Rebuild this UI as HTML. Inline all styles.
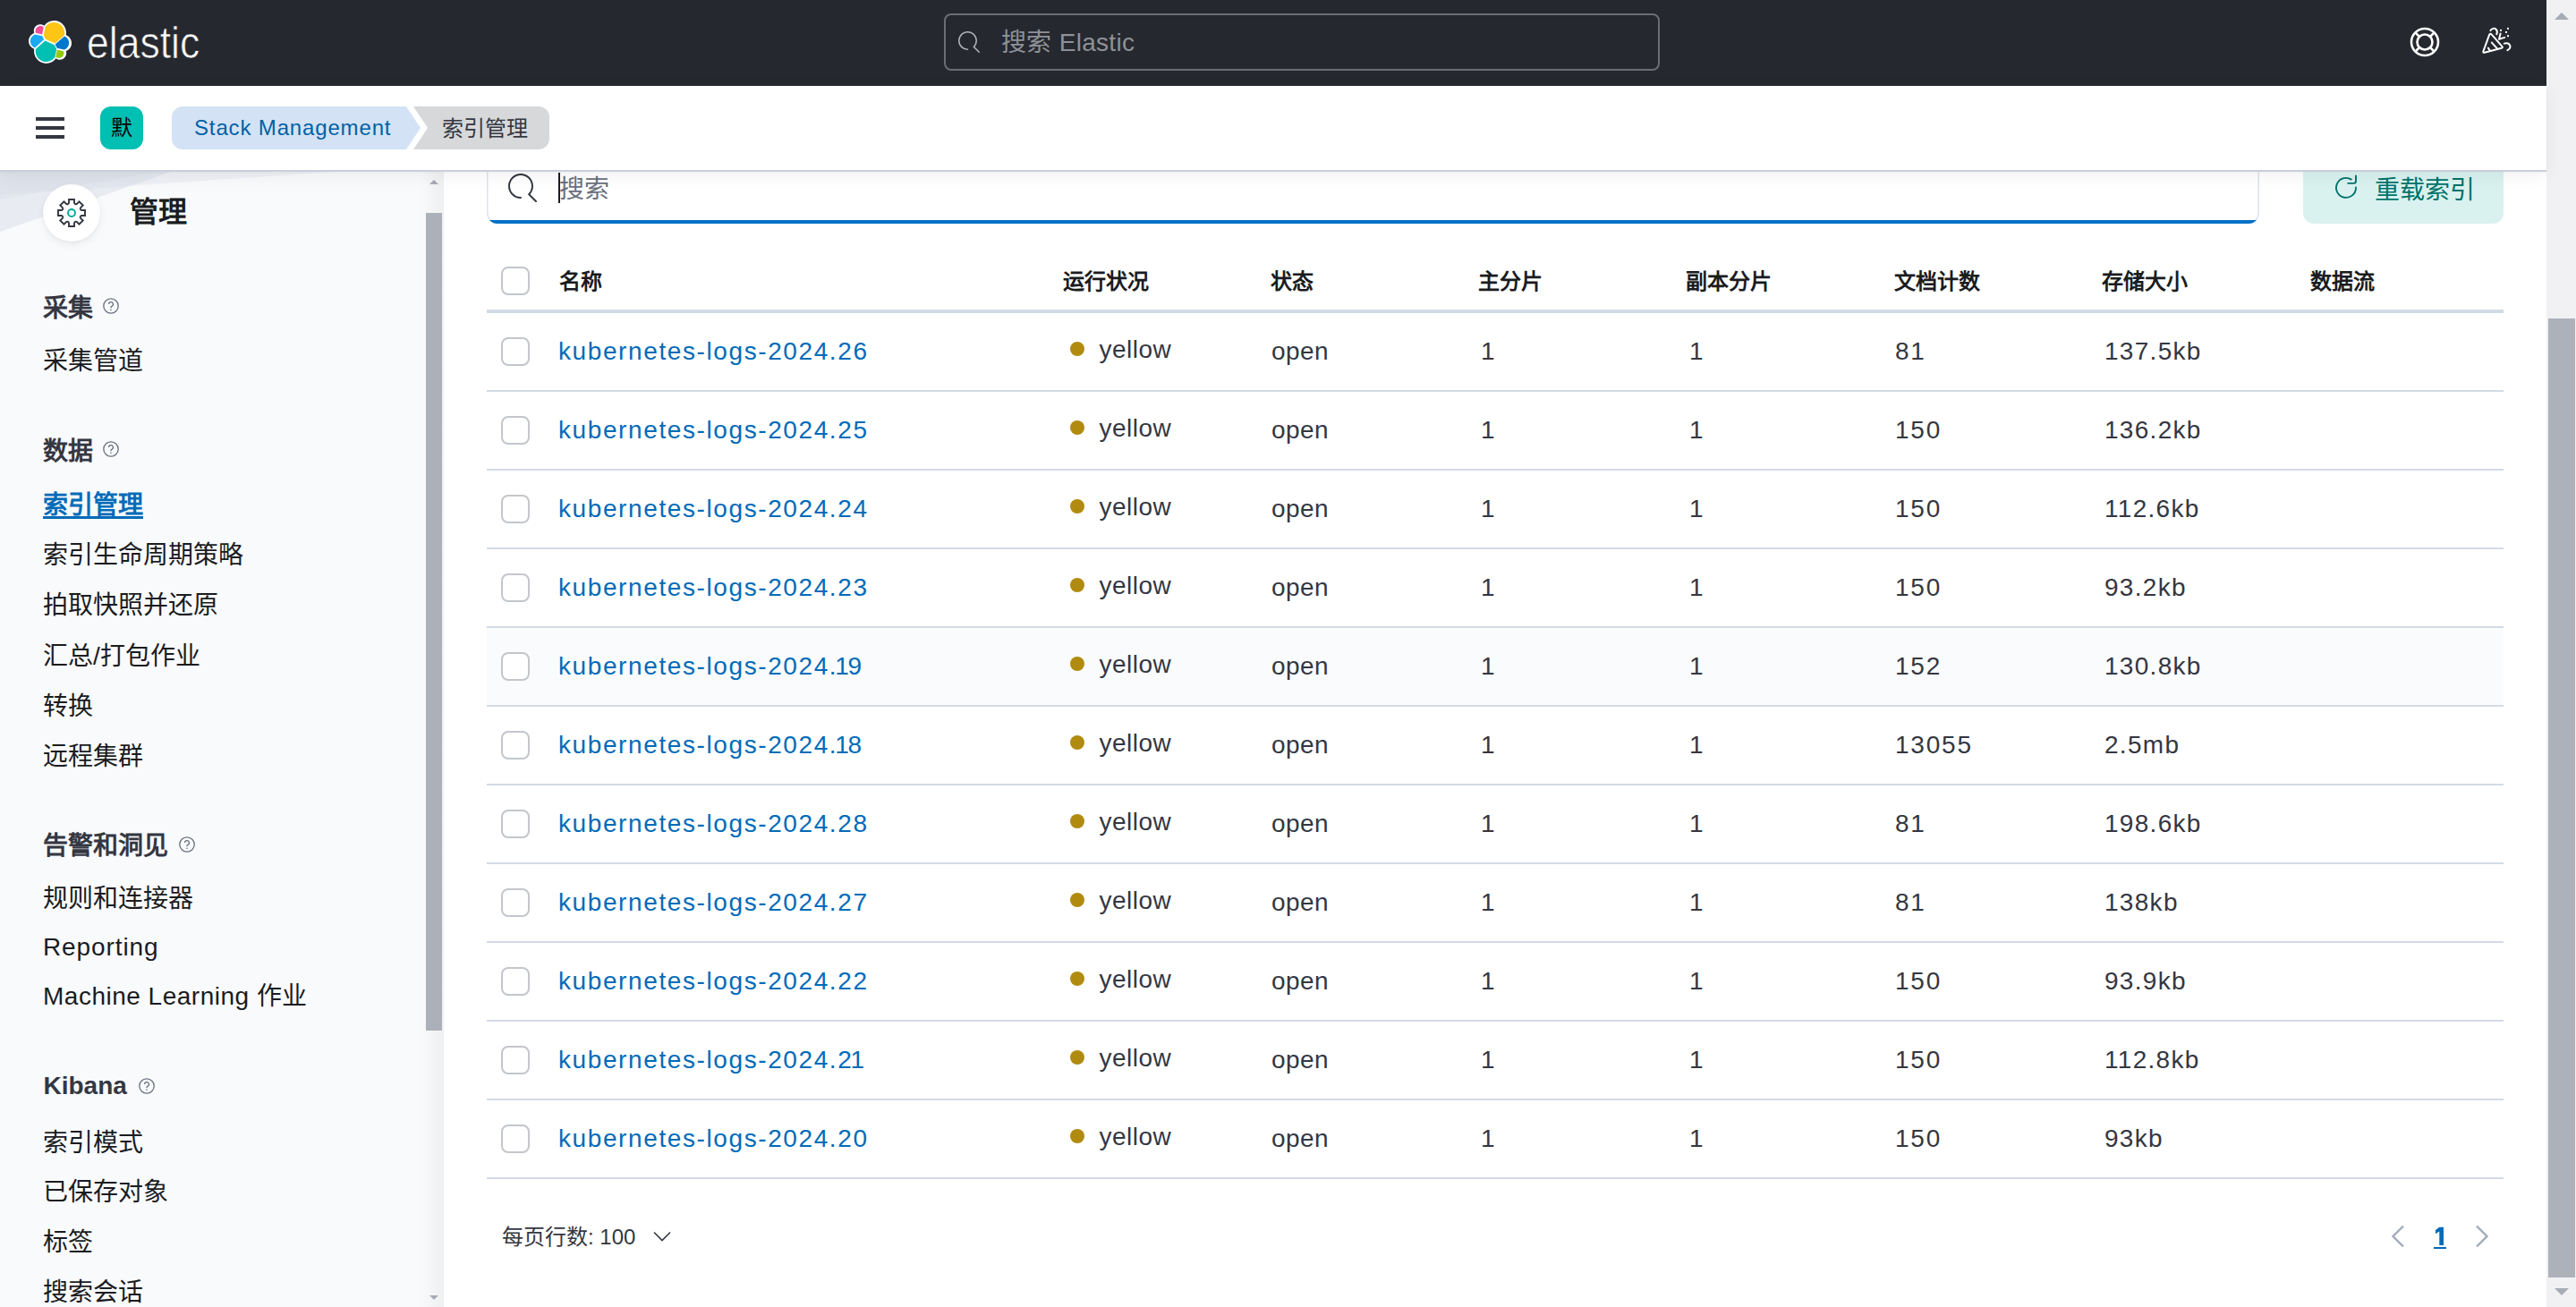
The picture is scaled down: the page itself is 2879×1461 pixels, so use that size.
<!DOCTYPE html>
<html lang="zh-CN"><head><meta charset="utf-8"><title>Index Management</title>
<style>
html,body{margin:0;padding:0;}
body{width:2879px;height:1461px;overflow:hidden;position:relative;background:#fff;font-family:'Liberation Sans', sans-serif;}
.t{position:absolute;white-space:nowrap;}
</style></head><body>
<div style="position:absolute;left:0;top:0;width:2846px;height:96px;background:#25282f"></div>
<svg style="position:absolute;left:32px;top:23px" width="48" height="48" viewBox="0 0 32 32"><g fill="none" fill-rule="evenodd">
<path fill="#FFF" d="M32 16.77c0-2.68-1.665-5.035-4.17-5.945.11-.565.165-1.14.165-1.730C27.995 4.110 23.945.060 18.965.060c-2.920 0-5.635 1.400-7.340 3.755-.840-.650-1.870-1.005-2.950-1.005-2.645 0-4.800 2.150-4.800 4.800 0 .585.105 1.145.295 1.665C1.685 10.175 0 12.545 0 15.225c0 2.695 1.675 5.045 4.185 5.955-.110.565-.165 1.140-.165 1.735 0 4.975 4.045 9.020 9.020 9.020 2.920 0 5.635-1.405 7.330-3.770.840.655 1.875 1.015 2.955 1.015 2.645 0 4.800-2.150 4.800-4.800 0-.585-.105-1.145-.295-1.665 2.485-.895 4.170-3.270 4.170-5.940"/>
<path fill="#FEC514" d="M12.58 13.78l7.005 3.195 7.070-6.195c.100-.510.150-1.020.150-1.555 0-4.365-3.550-7.915-7.915-7.915-2.610 0-5.045 1.285-6.525 3.445l-1.175 6.090 1.390 2.930z"/>
<path fill="#00BFB3" d="M5.33 21.2c-.1.51-.155 1.04-.155 1.575 0 4.375 3.56 7.935 7.94 7.935 2.63 0 5.075-1.3 6.55-3.475l1.165-6.075-1.555-2.975-7.03-3.205-6.915 6.22z"/>
<path fill="#F04E98" d="M5.29 9.17l4.8 1.135 1.05-5.46c-.65-.5-1.455-.77-2.29-.77-2.08 0-3.775 1.695-3.775 3.775 0 .46.075.9.215 1.32"/>
<path fill="#1BA9F5" d="M4.875 10.31c-2.145.71-3.64 2.77-3.64 5.03 0 2.2 1.36 4.165 3.405 4.945l6.74-6.09-1.235-2.64-5.27-1.245z"/>
<path fill="#93C90E" d="M20.2 27.13c.66.505 1.46.785 2.28.785 2.08 0 3.775-1.695 3.775-3.775 0-.46-.075-.9-.215-1.32l-4.795-1.12-1.045 5.43z"/>
<path fill="#0077CC" d="M21.175 20.43l5.28 1.235c2.145-.71 3.64-2.77 3.64-5.035 0-2.195-1.36-4.16-3.41-4.94l-6.905 6.05 1.395 2.69z"/>
</g></svg>
<div class="t" style="left:97px;top:23.2px;font-size:50px;line-height:50px;color:#fff;font-weight:400;letter-spacing:0px;transform:scaleX(0.89);transform-origin:0 0;-webkit-text-stroke:0.7px #25282f;">elastic</div>
<div style="position:absolute;left:1055px;top:15px;width:796px;height:60px;border:2px solid #6a6d74;border-radius:8px;box-sizing:content-box"></div>
<svg style="position:absolute;left:1071px;top:35px" width="24" height="24" viewBox="0 0 16 16"><path fill="#b0b2b6" d="M11.271 11.978l3.872 3.873a.502.502 0 0 0 .708 0 .502.502 0 0 0 0-.708l-3.565-3.564c2.38-2.747 2.267-6.923-.342-9.532-2.73-2.73-7.17-2.73-9.898 0-2.728 2.729-2.728 7.17 0 9.9a6.955 6.955 0 0 0 4.949 2.05.5.5 0 0 0 0-1 5.96 5.96 0 0 1-4.242-1.757 6.01 6.01 0 0 1 0-8.486c2.337-2.34 6.143-2.34 8.484 0a6.01 6.01 0 0 1 0 8.486.5.5 0 0 0 .034.738z"/></svg>
<div class="t" style="left:1119px;top:33.6px;font-size:28px;line-height:28px;color:#8e9196;font-weight:400;letter-spacing:0.3px;">搜索 Elastic</div>
<svg style="position:absolute;left:2693px;top:30px" width="34" height="34" viewBox="0 0 34 34" fill="none" stroke="#fff" stroke-width="2.6"><circle cx="17" cy="17" r="15"/><circle cx="17" cy="17" r="8.5"/><path d="M6.4 6.4l4.6 4.6M27.6 6.4l-4.6 4.6M6.4 27.6l4.6-4.6M27.6 27.6l-4.6-4.6"/></svg>
<svg style="position:absolute;left:2765px;top:24px" width="50" height="44" viewBox="0 0 50 44" fill="none" stroke="#fff" stroke-width="2" stroke-linecap="round" stroke-linejoin="round"><path d="M17.2 14.6L10.4 33.3Q9.9 35.2 11.8 34.8L30.8 29.8Q32.6 29.2 31.4 27.9L19.6 14.4Q18 12.9 17.2 14.6Z"/><path d="M19.9 23.6L26.4 30.8M15.9 29.6L18 33"/><path d="M18.4 10.2C19.6 7.6 23 7.1 24.8 9C26.1 10.5 26.1 12.6 25.3 14.3"/><path d="M29.6 13.6L28 19.8L34.2 17.9"/><path d="M33.8 24.6C36.6 23.6 39.6 24.6 40.3 27.1C40.8 29.1 39.6 31.1 37.4 32.2"/><rect x="29" y="8.9" width="2" height="2" fill="#fff" stroke="none"/><rect x="37" y="6.9" width="2" height="2" fill="#fff" stroke="none"/><rect x="35" y="11" width="2" height="2" fill="#fff" stroke="none"/><rect x="37" y="15.2" width="2" height="2" fill="#fff" stroke="none"/></svg>
<div style="position:absolute;left:0;top:96px;width:2846px;height:94px;background:#fff;box-shadow:0 2px 0 #c9cfdc, 0 2px 2px rgba(0,0,0,.07), 0 6px 20px rgba(0,0,0,.06);z-index:5"></div>
<div style="position:absolute;z-index:6;left:40px;top:131px;width:32px;height:4px;background:#343741"></div>
<div style="position:absolute;z-index:6;left:40px;top:141px;width:32px;height:4px;background:#343741"></div>
<div style="position:absolute;z-index:6;left:40px;top:151px;width:32px;height:4px;background:#343741"></div>
<div style="position:absolute;z-index:6;left:112px;top:119px;width:48px;height:48px;background:#00bfb3;border-radius:12px"></div>
<div class="t" style="z-index:7;left:112px;width:48px;text-align:center;top:129px;font-size:24px;line-height:28px;color:#000">默</div>
<svg style="position:absolute;z-index:6;left:192px;top:119px" width="424" height="48" viewBox="0 0 424 48">
<path d="M12 0H262L278 24L262 48H12A12 12 0 0 1 0 36V12A12 12 0 0 1 12 0Z" fill="#d3e2f4"/>
<path d="M270 0H410A12 12 0 0 1 422 12V36A12 12 0 0 1 410 48H270L286 24Z" fill="#d7d8da"/></svg>
<div class="t" style="left:217px;top:130.5px;font-size:24px;line-height:24px;color:#0061a6;font-weight:400;letter-spacing:0.85px;z-index:7;">Stack Management</div>
<div class="t" style="left:494px;top:131.7px;font-size:24px;line-height:24px;color:#343741;font-weight:400;letter-spacing:0px;z-index:7;">索引管理</div>
<div style="position:absolute;left:0;top:190px;width:496px;height:1271px;background:#f9fafc;overflow:hidden">
<svg style="position:absolute;left:0;top:0" width="496" height="200"><polygon points="0,0 197,0 0,69" fill="rgba(211,218,230,.45)"/><polygon points="0,0 186,0 0,33" fill="rgba(211,218,230,.3)"/><polygon points="0,0 400,0 0,28" fill="rgba(211,218,230,.3)"/></svg>
</div>
<div style="position:absolute;left:470px;top:190px;width:26px;height:1271px;background:linear-gradient(to right, rgba(0,0,0,0), rgba(0,0,0,.045))"></div>
<div style="position:absolute;left:476px;top:238px;width:18px;height:914px;background:#acb0b8"></div>
<div style="position:absolute;left:480px;top:201px;width:0;height:0;border-left:5px solid transparent;border-right:5px solid transparent;border-bottom:5px solid #a7abb3"></div>
<div style="position:absolute;left:480px;top:1448px;width:0;height:0;border-left:5px solid transparent;border-right:5px solid transparent;border-top:5px solid #a7abb3"></div>
<div style="position:absolute;left:48px;top:206px;width:64px;height:64px;border-radius:50%;background:#fff;box-shadow:0 4px 10px rgba(0,0,0,.06),0 1px 3px rgba(0,0,0,.05)"></div>
<svg style="position:absolute;left:62px;top:220px" width="36" height="36" viewBox="0 0 36 36" fill="none"><path d="M15.00 6.70L15.00 3.00L21.00 3.00L21.00 6.70Q21.67 9.13 23.87 7.89L26.49 5.27L30.73 9.51L28.11 12.13Q26.87 14.33 29.30 15.00L33.00 15.00L33.00 21.00L29.30 21.00Q26.87 21.67 28.11 23.87L30.73 26.49L26.49 30.73L23.87 28.11Q21.67 26.87 21.00 29.30L21.00 33.00L15.00 33.00L15.00 29.30Q14.33 26.87 12.13 28.11L9.51 30.73L5.27 26.49L7.89 23.87Q9.13 21.67 6.70 21.00L3.00 21.00L3.00 15.00L6.70 15.00Q9.13 14.33 7.89 12.13L5.27 9.51L9.51 5.27L12.13 7.89Q14.33 9.13 15.00 6.70Z" stroke="#343741" stroke-width="1.9" stroke-linejoin="miter"/><circle cx="18" cy="18" r="4" stroke="#00a69b" stroke-width="1.8"/></svg>
<div class="t" style="left:145px;top:220.9px;font-size:32px;line-height:32px;color:#1a1c21;font-weight:700;letter-spacing:0px;">管理</div>
<div class="t" style="left:48px;top:331.2px;font-size:28px;line-height:28px;color:#343741;font-weight:700;letter-spacing:0px;">采集</div>
<svg style="position:absolute;left:115px;top:333.4px" width="18" height="18" viewBox="0 0 18 18" fill="none"><circle cx="9" cy="9" r="8.2" stroke="#69707d" stroke-width="1.3"/><path d="M6.6 7.1a2.4 2.4 0 1 1 3.3 2.2c-.6.3-.9.7-.9 1.3v.6" stroke="#69707d" stroke-width="1.3"/><circle cx="9" cy="13.3" r=".8" fill="#69707d"/></svg>
<div class="t" style="left:48px;top:390.4px;font-size:28px;line-height:28px;color:#1a1c21;font-weight:400;letter-spacing:0px;">采集管道</div>
<div class="t" style="left:48px;top:491.1px;font-size:28px;line-height:28px;color:#343741;font-weight:700;letter-spacing:0px;">数据</div>
<svg style="position:absolute;left:115px;top:493.3px" width="18" height="18" viewBox="0 0 18 18" fill="none"><circle cx="9" cy="9" r="8.2" stroke="#69707d" stroke-width="1.3"/><path d="M6.6 7.1a2.4 2.4 0 1 1 3.3 2.2c-.6.3-.9.7-.9 1.3v.6" stroke="#69707d" stroke-width="1.3"/><circle cx="9" cy="13.3" r=".8" fill="#69707d"/></svg>
<div class="t" style="left:48px;top:550.8px;font-size:28px;line-height:28px;color:#006bb8;font-weight:700;letter-spacing:0px;text-decoration:underline;text-decoration-thickness:3px;text-underline-offset:3px;">索引管理</div>
<div class="t" style="left:48px;top:607.2px;font-size:28px;line-height:28px;color:#1a1c21;font-weight:400;letter-spacing:0px;">索引生命周期策略</div>
<div class="t" style="left:48px;top:663.4px;font-size:28px;line-height:28px;color:#1a1c21;font-weight:400;letter-spacing:0px;">拍取快照并还原</div>
<div class="t" style="left:48px;top:719.6px;font-size:28px;line-height:28px;color:#1a1c21;font-weight:400;letter-spacing:0px;">汇总/打包作业</div>
<div class="t" style="left:48px;top:775.8px;font-size:28px;line-height:28px;color:#1a1c21;font-weight:400;letter-spacing:0px;">转换</div>
<div class="t" style="left:48px;top:832.0px;font-size:28px;line-height:28px;color:#1a1c21;font-weight:400;letter-spacing:0px;">远程集群</div>
<div class="t" style="left:48px;top:932.4px;font-size:28px;line-height:28px;color:#343741;font-weight:700;letter-spacing:0px;">告警和洞见</div>
<svg style="position:absolute;left:200px;top:934.6px" width="18" height="18" viewBox="0 0 18 18" fill="none"><circle cx="9" cy="9" r="8.2" stroke="#69707d" stroke-width="1.3"/><path d="M6.6 7.1a2.4 2.4 0 1 1 3.3 2.2c-.6.3-.9.7-.9 1.3v.6" stroke="#69707d" stroke-width="1.3"/><circle cx="9" cy="13.3" r=".8" fill="#69707d"/></svg>
<div class="t" style="left:48px;top:991.3px;font-size:28px;line-height:28px;color:#1a1c21;font-weight:400;letter-spacing:0px;">规则和连接器</div>
<div class="t" style="left:48px;top:1044.9px;font-size:28px;line-height:28px;color:#1a1c21;font-weight:400;letter-spacing:0px;letter-spacing:0.9px;">Reporting</div>
<div class="t" style="left:48px;top:1100.4px;font-size:28px;line-height:28px;color:#1a1c21;font-weight:400;letter-spacing:0px;letter-spacing:0.5px;">Machine Learning 作业</div>
<div class="t" style="left:48.5px;top:1200.3px;font-size:28px;line-height:28px;color:#343741;font-weight:700;letter-spacing:0px;">Kibana</div>
<svg style="position:absolute;left:155px;top:1205px" width="18" height="18" viewBox="0 0 18 18" fill="none"><circle cx="9" cy="9" r="8.2" stroke="#69707d" stroke-width="1.3"/><path d="M6.6 7.1a2.4 2.4 0 1 1 3.3 2.2c-.6.3-.9.7-.9 1.3v.6" stroke="#69707d" stroke-width="1.3"/><circle cx="9" cy="13.3" r=".8" fill="#69707d"/></svg>
<div class="t" style="left:48px;top:1263.5px;font-size:28px;line-height:28px;color:#1a1c21;font-weight:400;letter-spacing:0px;">索引模式</div>
<div class="t" style="left:48px;top:1319.4px;font-size:28px;line-height:28px;color:#1a1c21;font-weight:400;letter-spacing:0px;">已保存对象</div>
<div class="t" style="left:48px;top:1375.3px;font-size:28px;line-height:28px;color:#1a1c21;font-weight:400;letter-spacing:0px;">标签</div>
<div class="t" style="left:48px;top:1431.2px;font-size:28px;line-height:28px;color:#1a1c21;font-weight:400;letter-spacing:0px;">搜索会话</div>
<div style="position:absolute;left:544px;top:150px;width:1981px;height:100px;background:#fff;box-shadow:inset 0 0 0 1.5px #dfe3ee;border-radius:12px;overflow:hidden"><div style="position:absolute;left:0;bottom:0;width:100%;height:4px;background:#0070c6"></div></div>
<svg style="position:absolute;left:568px;top:194px" width="32" height="32" viewBox="0 0 16 16"><path fill="#343741" d="M11.271 11.978l3.872 3.873a.502.502 0 0 0 .708 0 .502.502 0 0 0 0-.708l-3.565-3.564c2.38-2.747 2.267-6.923-.342-9.532-2.73-2.73-7.17-2.73-9.898 0-2.728 2.729-2.728 7.17 0 9.9a6.955 6.955 0 0 0 4.949 2.05.5.5 0 0 0 0-1 5.96 5.96 0 0 1-4.242-1.757 6.01 6.01 0 0 1 0-8.486c2.337-2.34 6.143-2.34 8.484 0a6.01 6.01 0 0 1 0 8.486.5.5 0 0 0 .034.738z"/></svg>
<div style="position:absolute;left:624px;top:193px;width:2px;height:34px;background:#1a1c21"></div>
<div class="t" style="left:624.5px;top:198.3px;font-size:28px;line-height:28px;color:#69707d;font-weight:400;letter-spacing:0px;">搜索</div>
<div style="position:absolute;left:2574px;top:170px;width:224px;height:80px;background:#d9f2ef;border-radius:12px"></div>
<svg style="position:absolute;left:2600px;top:186px" width="50" height="44" viewBox="0 0 50 44" fill="none" stroke="#00726b" stroke-width="1.9" stroke-linecap="round"><path d="M27.9 14.6A11 11 0 1 0 33 23.5"/><path d="M33 10.4V16.6Q33 18.9 30.7 18.9H24.2"/></svg>
<div class="t" style="left:2654px;top:198.8px;font-size:28px;line-height:28px;color:#00726b;font-weight:400;letter-spacing:0px;">重载索引</div>
<div style="position:absolute;left:544px;top:346px;width:2254px;height:4px;background:#d3dae6"></div>
<div style="position:absolute;left:560px;top:298px;width:32px;height:32px;box-sizing:border-box;border:2px solid #c3c6ca;border-radius:8px;background:#fff"></div>
<div class="t" style="left:625px;top:302.7px;font-size:24px;line-height:24px;color:#1a1c21;font-weight:700;letter-spacing:0px;">名称</div>
<div class="t" style="left:1188px;top:302.7px;font-size:24px;line-height:24px;color:#1a1c21;font-weight:700;letter-spacing:0px;">运行状况</div>
<div class="t" style="left:1420px;top:302.7px;font-size:24px;line-height:24px;color:#1a1c21;font-weight:700;letter-spacing:0px;">状态</div>
<div class="t" style="left:1652px;top:302.7px;font-size:24px;line-height:24px;color:#1a1c21;font-weight:700;letter-spacing:0px;">主分片</div>
<div class="t" style="left:1884px;top:302.7px;font-size:24px;line-height:24px;color:#1a1c21;font-weight:700;letter-spacing:0px;">副本分片</div>
<div class="t" style="left:2117px;top:302.7px;font-size:24px;line-height:24px;color:#1a1c21;font-weight:700;letter-spacing:0px;">文档计数</div>
<div class="t" style="left:2349px;top:302.7px;font-size:24px;line-height:24px;color:#1a1c21;font-weight:700;letter-spacing:0px;">存储大小</div>
<div class="t" style="left:2582px;top:302.7px;font-size:24px;line-height:24px;color:#1a1c21;font-weight:700;letter-spacing:0px;">数据流</div>
<div style="position:absolute;left:544px;top:436px;width:2254px;height:2px;background:#d3dae6"></div>
<div style="position:absolute;left:560px;top:377px;width:32px;height:32px;box-sizing:border-box;border:2px solid #c3c6ca;border-radius:8px;background:#fff"></div>
<div class="t" style="left:624px;top:379.3px;font-size:28px;line-height:28px;color:#006bb8;font-weight:400;letter-spacing:1.6px;">kubernetes-logs-2024.26</div>
<div style="position:absolute;left:1196px;top:382px;width:16px;height:16px;border-radius:50%;background:#b18b10"></div>
<div class="t" style="left:1228.5px;top:376.9px;font-size:28px;line-height:28px;color:#343741;font-weight:400;letter-spacing:0.5px;">yellow</div>
<div class="t" style="left:1421px;top:379.3px;font-size:28px;line-height:28px;color:#343741;font-weight:400;letter-spacing:0.4px;">open</div>
<div class="t" style="left:1655px;top:379.3px;font-size:28px;line-height:28px;color:#343741;font-weight:400;letter-spacing:0px;">1</div>
<div class="t" style="left:1888px;top:379.3px;font-size:28px;line-height:28px;color:#343741;font-weight:400;letter-spacing:0px;">1</div>
<div class="t" style="left:2118px;top:379.3px;font-size:28px;line-height:28px;color:#343741;font-weight:400;letter-spacing:1.8px;">81</div>
<div class="t" style="left:2352px;top:379.3px;font-size:28px;line-height:28px;color:#343741;font-weight:400;letter-spacing:1.3px;">137.5kb</div>
<div style="position:absolute;left:544px;top:524px;width:2254px;height:2px;background:#d3dae6"></div>
<div style="position:absolute;left:560px;top:465px;width:32px;height:32px;box-sizing:border-box;border:2px solid #c3c6ca;border-radius:8px;background:#fff"></div>
<div class="t" style="left:624px;top:467.3px;font-size:28px;line-height:28px;color:#006bb8;font-weight:400;letter-spacing:1.6px;">kubernetes-logs-2024.25</div>
<div style="position:absolute;left:1196px;top:470px;width:16px;height:16px;border-radius:50%;background:#b18b10"></div>
<div class="t" style="left:1228.5px;top:464.9px;font-size:28px;line-height:28px;color:#343741;font-weight:400;letter-spacing:0.5px;">yellow</div>
<div class="t" style="left:1421px;top:467.3px;font-size:28px;line-height:28px;color:#343741;font-weight:400;letter-spacing:0.4px;">open</div>
<div class="t" style="left:1655px;top:467.3px;font-size:28px;line-height:28px;color:#343741;font-weight:400;letter-spacing:0px;">1</div>
<div class="t" style="left:1888px;top:467.3px;font-size:28px;line-height:28px;color:#343741;font-weight:400;letter-spacing:0px;">1</div>
<div class="t" style="left:2118px;top:467.3px;font-size:28px;line-height:28px;color:#343741;font-weight:400;letter-spacing:1.8px;">150</div>
<div class="t" style="left:2352px;top:467.3px;font-size:28px;line-height:28px;color:#343741;font-weight:400;letter-spacing:1.3px;">136.2kb</div>
<div style="position:absolute;left:544px;top:612px;width:2254px;height:2px;background:#d3dae6"></div>
<div style="position:absolute;left:560px;top:553px;width:32px;height:32px;box-sizing:border-box;border:2px solid #c3c6ca;border-radius:8px;background:#fff"></div>
<div class="t" style="left:624px;top:555.3px;font-size:28px;line-height:28px;color:#006bb8;font-weight:400;letter-spacing:1.6px;">kubernetes-logs-2024.24</div>
<div style="position:absolute;left:1196px;top:558px;width:16px;height:16px;border-radius:50%;background:#b18b10"></div>
<div class="t" style="left:1228.5px;top:552.9px;font-size:28px;line-height:28px;color:#343741;font-weight:400;letter-spacing:0.5px;">yellow</div>
<div class="t" style="left:1421px;top:555.3px;font-size:28px;line-height:28px;color:#343741;font-weight:400;letter-spacing:0.4px;">open</div>
<div class="t" style="left:1655px;top:555.3px;font-size:28px;line-height:28px;color:#343741;font-weight:400;letter-spacing:0px;">1</div>
<div class="t" style="left:1888px;top:555.3px;font-size:28px;line-height:28px;color:#343741;font-weight:400;letter-spacing:0px;">1</div>
<div class="t" style="left:2118px;top:555.3px;font-size:28px;line-height:28px;color:#343741;font-weight:400;letter-spacing:1.8px;">150</div>
<div class="t" style="left:2352px;top:555.3px;font-size:28px;line-height:28px;color:#343741;font-weight:400;letter-spacing:1.3px;">112.6kb</div>
<div style="position:absolute;left:544px;top:700px;width:2254px;height:2px;background:#d3dae6"></div>
<div style="position:absolute;left:560px;top:641px;width:32px;height:32px;box-sizing:border-box;border:2px solid #c3c6ca;border-radius:8px;background:#fff"></div>
<div class="t" style="left:624px;top:643.3px;font-size:28px;line-height:28px;color:#006bb8;font-weight:400;letter-spacing:1.6px;">kubernetes-logs-2024.23</div>
<div style="position:absolute;left:1196px;top:646px;width:16px;height:16px;border-radius:50%;background:#b18b10"></div>
<div class="t" style="left:1228.5px;top:640.9px;font-size:28px;line-height:28px;color:#343741;font-weight:400;letter-spacing:0.5px;">yellow</div>
<div class="t" style="left:1421px;top:643.3px;font-size:28px;line-height:28px;color:#343741;font-weight:400;letter-spacing:0.4px;">open</div>
<div class="t" style="left:1655px;top:643.3px;font-size:28px;line-height:28px;color:#343741;font-weight:400;letter-spacing:0px;">1</div>
<div class="t" style="left:1888px;top:643.3px;font-size:28px;line-height:28px;color:#343741;font-weight:400;letter-spacing:0px;">1</div>
<div class="t" style="left:2118px;top:643.3px;font-size:28px;line-height:28px;color:#343741;font-weight:400;letter-spacing:1.8px;">150</div>
<div class="t" style="left:2352px;top:643.3px;font-size:28px;line-height:28px;color:#343741;font-weight:400;letter-spacing:1.3px;">93.2kb</div>
<div style="position:absolute;left:544px;top:702px;width:2254px;height:86px;background:#fafbfc"></div>
<div style="position:absolute;left:544px;top:788px;width:2254px;height:2px;background:#d3dae6"></div>
<div style="position:absolute;left:560px;top:729px;width:32px;height:32px;box-sizing:border-box;border:2px solid #c3c6ca;border-radius:8px;background:#fff"></div>
<div class="t" style="left:624px;top:731.3px;font-size:28px;line-height:28px;color:#006bb8;font-weight:400;letter-spacing:1.6px;">kubernetes-logs-2024.<span style="margin:0 -3px 0 -3px">1</span>9</div>
<div style="position:absolute;left:1196px;top:734px;width:16px;height:16px;border-radius:50%;background:#b18b10"></div>
<div class="t" style="left:1228.5px;top:728.9px;font-size:28px;line-height:28px;color:#343741;font-weight:400;letter-spacing:0.5px;">yellow</div>
<div class="t" style="left:1421px;top:731.3px;font-size:28px;line-height:28px;color:#343741;font-weight:400;letter-spacing:0.4px;">open</div>
<div class="t" style="left:1655px;top:731.3px;font-size:28px;line-height:28px;color:#343741;font-weight:400;letter-spacing:0px;">1</div>
<div class="t" style="left:1888px;top:731.3px;font-size:28px;line-height:28px;color:#343741;font-weight:400;letter-spacing:0px;">1</div>
<div class="t" style="left:2118px;top:731.3px;font-size:28px;line-height:28px;color:#343741;font-weight:400;letter-spacing:1.8px;">152</div>
<div class="t" style="left:2352px;top:731.3px;font-size:28px;line-height:28px;color:#343741;font-weight:400;letter-spacing:1.3px;">130.8kb</div>
<div style="position:absolute;left:544px;top:876px;width:2254px;height:2px;background:#d3dae6"></div>
<div style="position:absolute;left:560px;top:817px;width:32px;height:32px;box-sizing:border-box;border:2px solid #c3c6ca;border-radius:8px;background:#fff"></div>
<div class="t" style="left:624px;top:819.3px;font-size:28px;line-height:28px;color:#006bb8;font-weight:400;letter-spacing:1.6px;">kubernetes-logs-2024.<span style="margin:0 -3px 0 -3px">1</span>8</div>
<div style="position:absolute;left:1196px;top:822px;width:16px;height:16px;border-radius:50%;background:#b18b10"></div>
<div class="t" style="left:1228.5px;top:816.9px;font-size:28px;line-height:28px;color:#343741;font-weight:400;letter-spacing:0.5px;">yellow</div>
<div class="t" style="left:1421px;top:819.3px;font-size:28px;line-height:28px;color:#343741;font-weight:400;letter-spacing:0.4px;">open</div>
<div class="t" style="left:1655px;top:819.3px;font-size:28px;line-height:28px;color:#343741;font-weight:400;letter-spacing:0px;">1</div>
<div class="t" style="left:1888px;top:819.3px;font-size:28px;line-height:28px;color:#343741;font-weight:400;letter-spacing:0px;">1</div>
<div class="t" style="left:2118px;top:819.3px;font-size:28px;line-height:28px;color:#343741;font-weight:400;letter-spacing:1.8px;">13055</div>
<div class="t" style="left:2352px;top:819.3px;font-size:28px;line-height:28px;color:#343741;font-weight:400;letter-spacing:1.3px;">2.5mb</div>
<div style="position:absolute;left:544px;top:964px;width:2254px;height:2px;background:#d3dae6"></div>
<div style="position:absolute;left:560px;top:905px;width:32px;height:32px;box-sizing:border-box;border:2px solid #c3c6ca;border-radius:8px;background:#fff"></div>
<div class="t" style="left:624px;top:907.3px;font-size:28px;line-height:28px;color:#006bb8;font-weight:400;letter-spacing:1.6px;">kubernetes-logs-2024.28</div>
<div style="position:absolute;left:1196px;top:910px;width:16px;height:16px;border-radius:50%;background:#b18b10"></div>
<div class="t" style="left:1228.5px;top:904.9px;font-size:28px;line-height:28px;color:#343741;font-weight:400;letter-spacing:0.5px;">yellow</div>
<div class="t" style="left:1421px;top:907.3px;font-size:28px;line-height:28px;color:#343741;font-weight:400;letter-spacing:0.4px;">open</div>
<div class="t" style="left:1655px;top:907.3px;font-size:28px;line-height:28px;color:#343741;font-weight:400;letter-spacing:0px;">1</div>
<div class="t" style="left:1888px;top:907.3px;font-size:28px;line-height:28px;color:#343741;font-weight:400;letter-spacing:0px;">1</div>
<div class="t" style="left:2118px;top:907.3px;font-size:28px;line-height:28px;color:#343741;font-weight:400;letter-spacing:1.8px;">81</div>
<div class="t" style="left:2352px;top:907.3px;font-size:28px;line-height:28px;color:#343741;font-weight:400;letter-spacing:1.3px;">198.6kb</div>
<div style="position:absolute;left:544px;top:1052px;width:2254px;height:2px;background:#d3dae6"></div>
<div style="position:absolute;left:560px;top:993px;width:32px;height:32px;box-sizing:border-box;border:2px solid #c3c6ca;border-radius:8px;background:#fff"></div>
<div class="t" style="left:624px;top:995.3px;font-size:28px;line-height:28px;color:#006bb8;font-weight:400;letter-spacing:1.6px;">kubernetes-logs-2024.27</div>
<div style="position:absolute;left:1196px;top:998px;width:16px;height:16px;border-radius:50%;background:#b18b10"></div>
<div class="t" style="left:1228.5px;top:992.9px;font-size:28px;line-height:28px;color:#343741;font-weight:400;letter-spacing:0.5px;">yellow</div>
<div class="t" style="left:1421px;top:995.3px;font-size:28px;line-height:28px;color:#343741;font-weight:400;letter-spacing:0.4px;">open</div>
<div class="t" style="left:1655px;top:995.3px;font-size:28px;line-height:28px;color:#343741;font-weight:400;letter-spacing:0px;">1</div>
<div class="t" style="left:1888px;top:995.3px;font-size:28px;line-height:28px;color:#343741;font-weight:400;letter-spacing:0px;">1</div>
<div class="t" style="left:2118px;top:995.3px;font-size:28px;line-height:28px;color:#343741;font-weight:400;letter-spacing:1.8px;">81</div>
<div class="t" style="left:2352px;top:995.3px;font-size:28px;line-height:28px;color:#343741;font-weight:400;letter-spacing:1.3px;">138kb</div>
<div style="position:absolute;left:544px;top:1140px;width:2254px;height:2px;background:#d3dae6"></div>
<div style="position:absolute;left:560px;top:1081px;width:32px;height:32px;box-sizing:border-box;border:2px solid #c3c6ca;border-radius:8px;background:#fff"></div>
<div class="t" style="left:624px;top:1083.3px;font-size:28px;line-height:28px;color:#006bb8;font-weight:400;letter-spacing:1.6px;">kubernetes-logs-2024.22</div>
<div style="position:absolute;left:1196px;top:1086px;width:16px;height:16px;border-radius:50%;background:#b18b10"></div>
<div class="t" style="left:1228.5px;top:1080.9px;font-size:28px;line-height:28px;color:#343741;font-weight:400;letter-spacing:0.5px;">yellow</div>
<div class="t" style="left:1421px;top:1083.3px;font-size:28px;line-height:28px;color:#343741;font-weight:400;letter-spacing:0.4px;">open</div>
<div class="t" style="left:1655px;top:1083.3px;font-size:28px;line-height:28px;color:#343741;font-weight:400;letter-spacing:0px;">1</div>
<div class="t" style="left:1888px;top:1083.3px;font-size:28px;line-height:28px;color:#343741;font-weight:400;letter-spacing:0px;">1</div>
<div class="t" style="left:2118px;top:1083.3px;font-size:28px;line-height:28px;color:#343741;font-weight:400;letter-spacing:1.8px;">150</div>
<div class="t" style="left:2352px;top:1083.3px;font-size:28px;line-height:28px;color:#343741;font-weight:400;letter-spacing:1.3px;">93.9kb</div>
<div style="position:absolute;left:544px;top:1228px;width:2254px;height:2px;background:#d3dae6"></div>
<div style="position:absolute;left:560px;top:1169px;width:32px;height:32px;box-sizing:border-box;border:2px solid #c3c6ca;border-radius:8px;background:#fff"></div>
<div class="t" style="left:624px;top:1171.3px;font-size:28px;line-height:28px;color:#006bb8;font-weight:400;letter-spacing:1.6px;">kubernetes-logs-2024.2<span style="margin:0 -3px 0 -3px">1</span></div>
<div style="position:absolute;left:1196px;top:1174px;width:16px;height:16px;border-radius:50%;background:#b18b10"></div>
<div class="t" style="left:1228.5px;top:1168.9px;font-size:28px;line-height:28px;color:#343741;font-weight:400;letter-spacing:0.5px;">yellow</div>
<div class="t" style="left:1421px;top:1171.3px;font-size:28px;line-height:28px;color:#343741;font-weight:400;letter-spacing:0.4px;">open</div>
<div class="t" style="left:1655px;top:1171.3px;font-size:28px;line-height:28px;color:#343741;font-weight:400;letter-spacing:0px;">1</div>
<div class="t" style="left:1888px;top:1171.3px;font-size:28px;line-height:28px;color:#343741;font-weight:400;letter-spacing:0px;">1</div>
<div class="t" style="left:2118px;top:1171.3px;font-size:28px;line-height:28px;color:#343741;font-weight:400;letter-spacing:1.8px;">150</div>
<div class="t" style="left:2352px;top:1171.3px;font-size:28px;line-height:28px;color:#343741;font-weight:400;letter-spacing:1.3px;">112.8kb</div>
<div style="position:absolute;left:544px;top:1316px;width:2254px;height:2px;background:#d3dae6"></div>
<div style="position:absolute;left:560px;top:1257px;width:32px;height:32px;box-sizing:border-box;border:2px solid #c3c6ca;border-radius:8px;background:#fff"></div>
<div class="t" style="left:624px;top:1259.3px;font-size:28px;line-height:28px;color:#006bb8;font-weight:400;letter-spacing:1.6px;">kubernetes-logs-2024.20</div>
<div style="position:absolute;left:1196px;top:1262px;width:16px;height:16px;border-radius:50%;background:#b18b10"></div>
<div class="t" style="left:1228.5px;top:1256.9px;font-size:28px;line-height:28px;color:#343741;font-weight:400;letter-spacing:0.5px;">yellow</div>
<div class="t" style="left:1421px;top:1259.3px;font-size:28px;line-height:28px;color:#343741;font-weight:400;letter-spacing:0.4px;">open</div>
<div class="t" style="left:1655px;top:1259.3px;font-size:28px;line-height:28px;color:#343741;font-weight:400;letter-spacing:0px;">1</div>
<div class="t" style="left:1888px;top:1259.3px;font-size:28px;line-height:28px;color:#343741;font-weight:400;letter-spacing:0px;">1</div>
<div class="t" style="left:2118px;top:1259.3px;font-size:28px;line-height:28px;color:#343741;font-weight:400;letter-spacing:1.8px;">150</div>
<div class="t" style="left:2352px;top:1259.3px;font-size:28px;line-height:28px;color:#343741;font-weight:400;letter-spacing:1.3px;">93kb</div>
<div class="t" style="left:561px;top:1370.7px;font-size:24px;line-height:24px;color:#343741;font-weight:400;letter-spacing:0px;">每页行数: 100</div>
<svg style="position:absolute;left:729px;top:1375px" width="22" height="14" viewBox="0 0 22 14" fill="none" stroke="#343741" stroke-width="1.6"><path d="M2 2.5L11 11.5L20 2.5"/></svg>
<svg style="position:absolute;left:2670px;top:1368px" width="20" height="28" viewBox="0 0 20 28" fill="none" stroke="#a2abba" stroke-width="2.4"><path d="M16 2.5L4.5 14L16 25.5"/></svg>
<svg style="position:absolute;left:2764px;top:1368px" width="20" height="28" viewBox="0 0 20 28" fill="none" stroke="#a2abba" stroke-width="2.4"><path d="M4 2.5L15.5 14L4 25.5"/></svg>
<svg style="position:absolute;left:2716px;top:1368px" width="20" height="26" viewBox="2716 1368 20 26"><path d="M2726.3 1371.7H2731V1391.9H2726.3V1376.6L2722 1379.3V1375Z" fill="#006bb8"/></svg>
<div style="position:absolute;left:2720px;top:1394px;width:14px;height:2px;background:#006bb8"></div>
<div style="position:absolute;left:2846px;top:0;width:33px;height:1461px;background:#f1f1f4"></div>
<div style="position:absolute;left:2848px;top:356px;width:30px;height:1072px;background:#adb1b9"></div>
<div style="position:absolute;left:2855px;top:14px;width:0;height:0;border-left:8px solid transparent;border-right:8px solid transparent;border-bottom:8px solid #a7abb3"></div>
<div style="position:absolute;left:2855px;top:1440px;width:0;height:0;border-left:8px solid transparent;border-right:8px solid transparent;border-top:8px solid #a7abb3"></div>
</body></html>
